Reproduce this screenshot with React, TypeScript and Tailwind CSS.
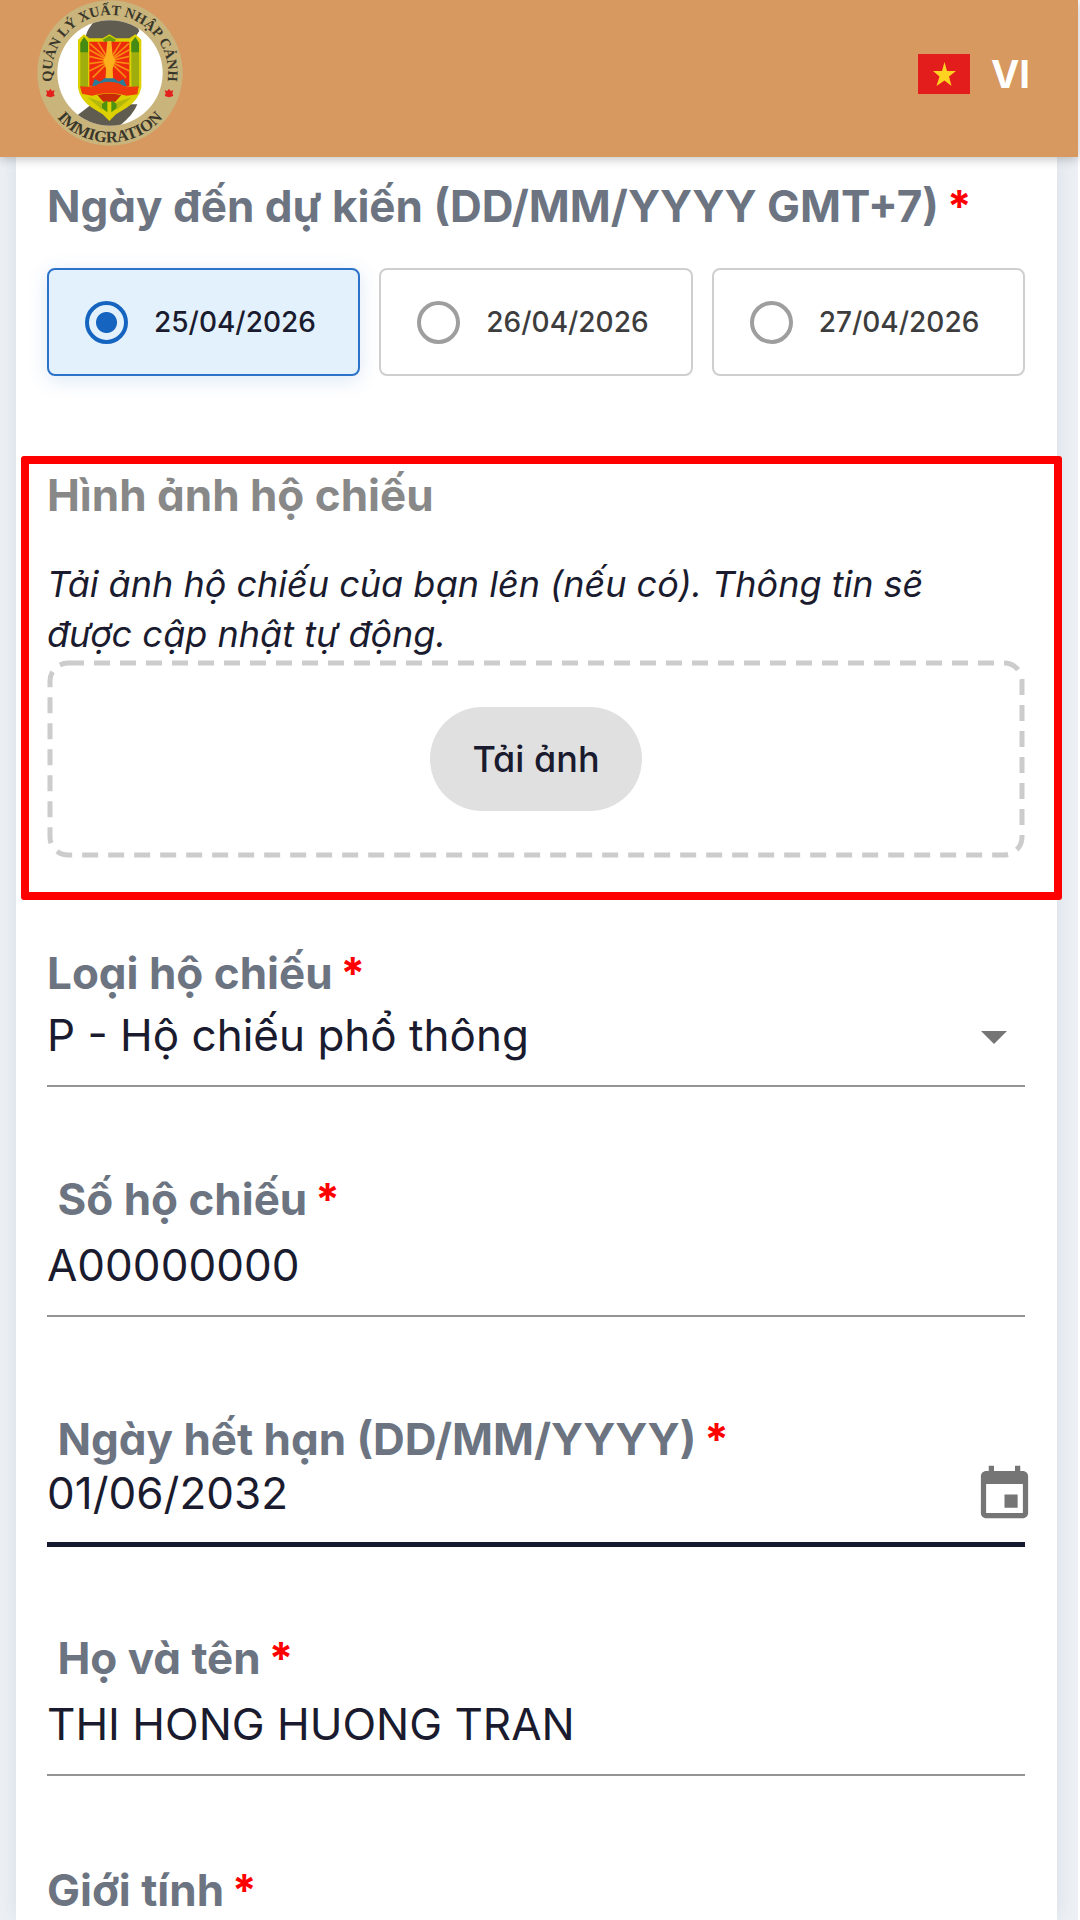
import { useState, type ReactNode } from 'react';

function EmblemLogo() {
  const rays = [
    [-58, -52], [-60, -34], [-60, -14], [-60, 8], [-60, 30], [-50, 50],
    [58, -52], [60, -34], [60, -14], [60, 8], [60, 30], [50, 50],
    [-34, -56], [34, -56],
  ];
  return (
    <svg viewBox="111 -1 438 438" className="size-[146px]" role="img" aria-label="Quản lý xuất nhập cảnh">
      <defs>
        <clipPath id="disc">
          <circle cx="330" cy="218" r="158" />
        </clipPath>
        <path id="arcTop" d="M159 250 A174 174 0 1 1 501 250" />
        <path id="arcBottom" d="M122 218 A208 208 0 0 0 538 218" />
      </defs>
      <circle cx="330" cy="218" r="218" fill="#c9b47c" />
      <circle cx="330" cy="218" r="158" fill="#ffffff" />
      <g clipPath="url(#disc)" fill="#605c50">
        <path d="M258 105 Q262 85 290 55 H400 L418 92 L400 118 H262Z" />
        <path d="M232 345 L275 312 H412 Q400 345 352 382 H250Z" />
      </g>
      <path
        d="M234 118 L252 102 L268 114 H308 L328 102 L348 114 H388 L406 102 L424 118 V262 Q416 298 380 322 L348 342 L328 362 L308 342 L276 322 Q240 298 234 262Z"
        fill="#ddd000"
      />
      <path d="M241 128 L252 110 L264 126 V262 H241Z M394 126 L406 110 L417 128 V262 H394Z" fill="#9fae0c" />
      <path d="M241 128 L252 110 L264 126 V156 H241Z M394 126 L406 110 L417 128 V156 H394Z" fill="#458a12" />
      <path d="M308 118 L328 106 L348 118 L340 128 H316Z" fill="#6d9d0e" />
      <path d="M268 124 H388 V258 H268Z" fill="#ee2a0c" />
      <g stroke="#f98a12" strokeWidth="5">
        {rays.map(([dx, dy]) => (
          <line key={`${dx},${dy}`} x1="328" y1="182" x2={328 + dx} y2={182 + dy} />
        ))}
      </g>
      <path d="M322 122 H334 L338 165 L346 180 L338 205 L340 250 H316 L318 205 L310 180 L318 165Z" fill="#fbb01c" />
      <path d="M276 258 L284 236 L300 244 L314 234 H342 L356 244 L370 236 L380 258Z" fill="#2b7c99" />
      <path d="M240 258 Q285 262 296 250 Q328 238 360 250 Q372 262 416 258 L412 282 L380 286 Q328 272 276 286 L246 280Z" fill="#ee3a0c" />
      <path d="M292 284 Q328 276 364 284 L346 304 H310Z" fill="#c92a08" />
      <path d="M262 290 L306 328 V306Z M396 290 L350 328 V306Z" fill="#b5b80c" />
      <path d="M306 310 L322 300 V336 L306 324Z M350 310 L334 300 V336 L350 324Z" fill="#4f9210" />
      <path d="M151 265 l5 7 8 -2 -3 9 3 8 -13 4 -13 -4 3 -8 -3 -9 8 2Z M507 265 l5 7 8 -2 -3 9 3 8 -13 4 -13 -4 3 -8 -3 -9 8 2Z" fill="#e3201b" />
      <g fill="#39372a" className="font-['Liberation_Serif',serif] font-bold" textAnchor="middle">
        <text fontSize="43">
          <textPath href="#arcTop" startOffset="50%">QUẢN LÝ XUẤT NHẬP CẢNH</textPath>
        </text>
        <text fontSize="49">
          <textPath href="#arcBottom" startOffset="50%">IMMIGRATION</textPath>
        </text>
      </g>
    </svg>
  );
}

function VietnamFlag() {
  return (
    <svg viewBox="0 0 52 40" className="h-10 w-[52px]" aria-hidden="true">
      <rect width="52" height="40" fill="#e31d1c" />
      <path d="M26.5 8 L29 17 L38 17 L31 22.5 L33.5 32 L26.5 26.5 L18.5 32 L21.5 22.5 L15 17 L24 17Z" fill="#ffd221" />
    </svg>
  );
}

const labelClass = 'block text-[44px] leading-[52px] font-bold text-[#6c7481]';
const valueClass =
  'block w-full appearance-none bg-transparent p-0 text-[44px] leading-[56px] h-14 text-[#1a1b2e] outline-none';

function Required() {
  return <span className="ml-2 text-[#ff0000]">*</span>;
}

function Field({ id, label, className, lineClass, children }: {
  id: string;
  label: string;
  className: string;
  lineClass: string;
  children: ReactNode;
}) {
  return (
    <div className={className}>
      <label htmlFor={id} className={labelClass}>
        {label}
        <Required />
      </label>
      <div className={`flex items-center ${lineClass}`}>{children}</div>
    </div>
  );
}

const dates = ['25/04/2026', '26/04/2026', '27/04/2026'];
const thinLine = 'border-b-2 border-[#949494] pb-[22px]';

export default function App() {
  const [arrival, setArrival] = useState(dates[0]);
  return (
    <div className="min-h-screen bg-white pr-0.5 font-['Inter',sans-serif] [font-feature-settings:'cv11']">
      <div className="flex min-h-screen flex-col bg-[#edf1f6]">
        <header className="relative z-10 flex h-[157px] items-start justify-between bg-[#d7995f] pr-12 pl-[37px] shadow-[0_2px_10px_rgba(0,0,0,0.25)]">
          <EmblemLogo />
          <button type="button" className="mt-[50px] flex items-center gap-[21px] text-[38px] leading-[48px] font-bold text-white">
            <VietnamFlag />
            VI
          </button>
        </header>

        <main className="mr-[21px] ml-4 grow bg-white pt-[23px] pr-8 pl-[31px] shadow-[0_0_20px_rgba(60,80,100,0.12)]">
          <fieldset>
            <legend className={labelClass}>
              Ngày đến dự kiến (DD/MM/YYYY GMT+7)
              <Required />
            </legend>
            <div className="mt-9 grid grid-cols-3 gap-[19px]">
              {dates.map((date) => (
                <label
                  key={date}
                  className="flex h-[108px] items-center gap-[26px] rounded-lg border-2 border-[#cfcfcf] pl-9 text-[28px] font-medium text-[#3d3d3d] has-checked:border-[#2b72c8] has-checked:bg-[#e3f1fc] has-checked:text-[#1a1b2e] has-checked:shadow-[0_4px_20px_rgba(21,101,192,0.15)]"
                >
                  <input
                    type="radio"
                    name="arrival"
                    checked={arrival === date}
                    onChange={() => setArrival(date)}
                    className="size-[43px] shrink-0 appearance-none rounded-full border-4 border-[#9e9e9e] checked:border-[#1565c0] checked:bg-[radial-gradient(circle,#1565c0_10px,transparent_11px)]"
                  />
                  {date}
                </label>
              ))}
            </div>
          </fieldset>

          <section className="mt-20 -mr-[37px] -ml-[26px] rounded-[3px] border-8 border-[#ff0000] pt-[5px] pr-[29px] pb-[34px] pl-[18px]">
            <h2 className="text-[44px] leading-[52px] font-bold text-[#888888]">Hình ảnh hộ chiếu</h2>
            <p className="mt-[38px] pr-10 text-[36px] leading-[50px] text-[#1a1b2e] italic">
              Tải ảnh hộ chiếu của bạn lên (nếu có). Thông tin sẽ được cập nhật tự động.
            </p>
            <div className="relative mt-px flex h-[198px] items-center justify-center">
              <svg className="pointer-events-none absolute inset-[3px] h-[192px] w-[calc(100%-6px)] overflow-visible" aria-hidden="true">
                <rect width="100%" height="100%" rx="18" fill="none" stroke="#cccccc" strokeWidth="5" strokeDasharray="16 10" />
              </svg>
              <button type="button" className="h-[104px] rounded-full bg-[#e0e0e0] px-[42px] text-[36px] font-medium text-[#1a1b2e]">
                Tải ảnh
              </button>
            </div>
          </section>

          <Field id="passport-type" label="Loại hộ chiếu" className="mt-[47px]" lineClass={`relative pt-2 ${thinLine}`}>
            <select id="passport-type" className={valueClass}>
              <option>P - Hộ chiếu phổ thông</option>
            </select>
            <svg viewBox="0 0 26 13" className="pointer-events-none absolute top-8 right-[18px] h-[13px] w-[26px]" aria-hidden="true">
              <path d="M0 0H26L13 13Z" fill="#757575" />
            </svg>
          </Field>

          <Field id="passport-number" label={'\u00a0Số hộ chiếu'} className="mt-[86px]" lineClass={`pt-3 ${thinLine}`}>
            <input id="passport-number" defaultValue="A00000000" className={valueClass} />
          </Field>

          <Field
            id="expiry"
            label={'\u00a0Ngày hết hạn (DD/MM/YYYY)'}
            className="mt-24"
            lineClass="relative border-b-[5px] border-[#161a2e] pb-[21px]"
          >
            <input id="expiry" defaultValue="01/06/2032" className={valueClass} />
            <button type="button" aria-label="Chọn ngày" className="absolute -top-0.5 -right-[11px]">
              <svg viewBox="0 0 24 24" className="size-[63px]" fill="#757575" aria-hidden="true">
                <path d="M17 12h-5v5h5v-5zM16 1v2H8V1H6v2H5c-1.11 0-1.99.9-1.99 2L3 19c0 1.1.89 2 2 2h14c1.1 0 2-.9 2-2V5c0-1.1-.9-2-2-2h-1V1h-2zm3 18H5V8h14v11z" />
              </svg>
            </button>
          </Field>

          <Field id="full-name" label={'\u00a0Họ và tên'} className="mt-[85px]" lineClass={`pt-3 ${thinLine}`}>
            <input id="full-name" defaultValue="THI HONG HUONG TRAN" className={valueClass} />
          </Field>

          <p className={`mt-[88px] ${labelClass}`}>
            Giới tính
            <Required />
          </p>
        </main>
      </div>
    </div>
  );
}
